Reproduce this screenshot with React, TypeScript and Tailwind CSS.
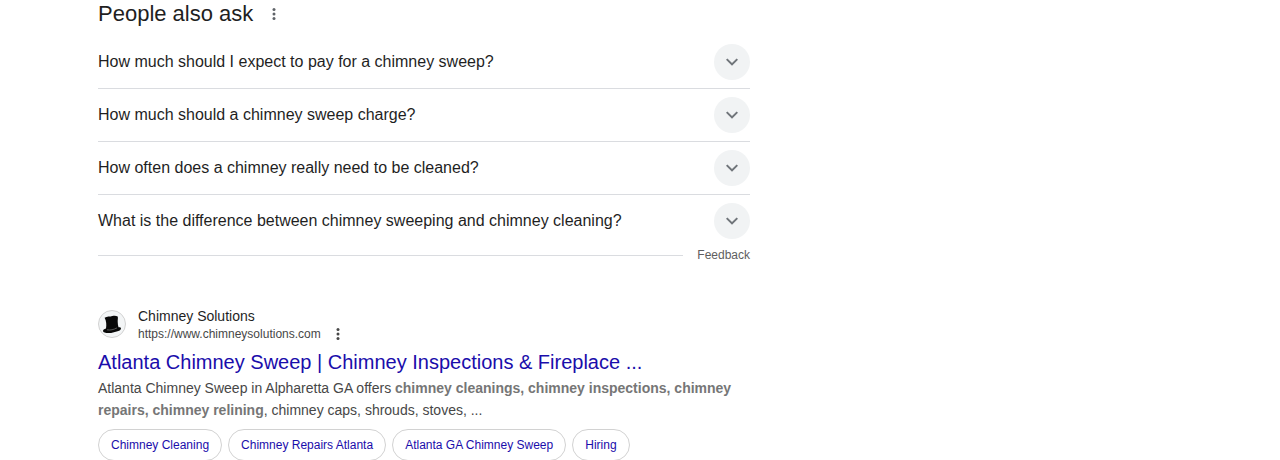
const questions = [
  'How much should I expect to pay for a chimney sweep?',
  'How much should a chimney sweep charge?',
  'How often does a chimney really need to be cleaned?',
  'What is the difference between chimney sweeping and chimney cleaning?',
];

const sitelinks = ['Chimney Cleaning', 'Chimney Repairs Atlanta', 'Atlanta GA Chimney Sweep', 'Hiring'];

function Dots({ className }: { className: string }) {
  return (
    <svg viewBox="0 0 4 12" className={className} fill="currentColor" aria-hidden="true">
      <circle cx="2" cy="1.6" r="1.5" />
      <circle cx="2" cy="6" r="1.5" />
      <circle cx="2" cy="10.4" r="1.5" />
    </svg>
  );
}

function Question({ text, first }: { text: string; first: boolean }) {
  return (
    <li className={first ? '' : 'border-t border-[#dadce0]'}>
      <button type="button" className="flex h-[52px] w-full items-center justify-between text-left text-base text-[#1f1f1f]">
        <span>{text}</span>
        <span className="flex size-9 shrink-0 items-center justify-center rounded-full bg-[#f1f3f4] text-[#70757a]">
          <svg viewBox="0 0 24 24" className="size-6" fill="currentColor" aria-hidden="true">
            <path d="M7.41 8.4 12 12.98l4.59-4.58L18 9.8l-6 6-6-6z" />
          </svg>
        </span>
      </button>
    </li>
  );
}

export default function App() {
  return (
    <main className="h-screen overflow-hidden bg-white font-['Liberation_Sans',Arial,sans-serif]">
      <div className="ml-[98px] max-w-[652px]">
        <section>
          <header className="flex h-9 items-start gap-[19px]">
            <h2 className="text-[22px] leading-7 text-[#1f1f1f]">People also ask</h2>
            <button type="button" aria-label="About this result" className="flex h-7 items-center text-[#5f6368]">
              <Dots className="h-3 w-1" />
            </button>
          </header>
          <ul>
            {questions.map((q, i) => (
              <Question key={q} text={q} first={i === 0} />
            ))}
          </ul>
          <div className="flex h-4 items-center gap-3.5">
            <span className="h-px grow bg-[#dadce0]" />
            <a href="#feedback" className="text-xs text-[#5e5e5e]">Feedback</a>
          </div>
        </section>

        <article className="mt-[43px]">
          <div className="flex items-center gap-3">
            <span className="flex size-7 items-center justify-center rounded-full border border-[#d2d2d2] bg-[#f3f5f6]">
              <svg viewBox="0 0 20 20" className="size-5" aria-hidden="true">
                <path
                  d="M2.600 3.700C5 2.400 8 2.700 10.300 2c2-.6 4-.4 5.400.5.500 1.500-.1 3.300 0 5.500.1 2 .3 3.800.8 5.300 1.400-.2 2.500.2 2.500 1.200 0 1.600-2 2.600-4.300 3-2.600.5-4.700 1.500-7.700 1.600-3 .1-5.900-.4-6-2 0-1.400 1.100-2.300 3-2.700.6-3.400.4-7.400-1.400-10.700z"
                  fill="#080808"
                />
                <path d="M5 15.800c3.500.6 6.500-.1 10-1.900" fill="none" stroke="#777" strokeWidth=".7" />
              </svg>
            </span>
            <div>
              <div className="text-sm leading-5 text-[#1f1f1f]">Chimney Solutions</div>
              <div className="flex items-center gap-[15px] text-xs leading-4 text-[#474747]">
                <cite className="not-italic">https://www.chimneysolutions.com</cite>
                <button type="button" aria-label="About this result">
                  <Dots className="h-3 w-1" />
                </button>
              </div>
            </div>
          </div>
          <h3 className="mt-[7px] text-xl leading-[26px] text-[#1a0dab]">
            <a href="#result">Atlanta Chimney Sweep | Chimney Inspections &amp; Fireplace ...</a>
          </h3>
          <p className="mt-0.5 text-sm leading-[22px] text-[#474747]">
            Atlanta Chimney Sweep in Alpharetta GA offers{' '}
            <b className="text-[#767676]">chimney cleanings, chimney inspections, chimney repairs, chimney relining</b>,
            chimney caps, shrouds, stoves, ...
          </p>
          <nav className="mt-2 flex gap-1.5">
            {sitelinks.map((s) => (
              <a key={s} href="#sitelink" className="flex h-8 items-center rounded-full border border-[#d2d2d2] px-3 text-xs text-[#1a0dab]">
                {s}
              </a>
            ))}
          </nav>
        </article>
      </div>
    </main>
  );
}
